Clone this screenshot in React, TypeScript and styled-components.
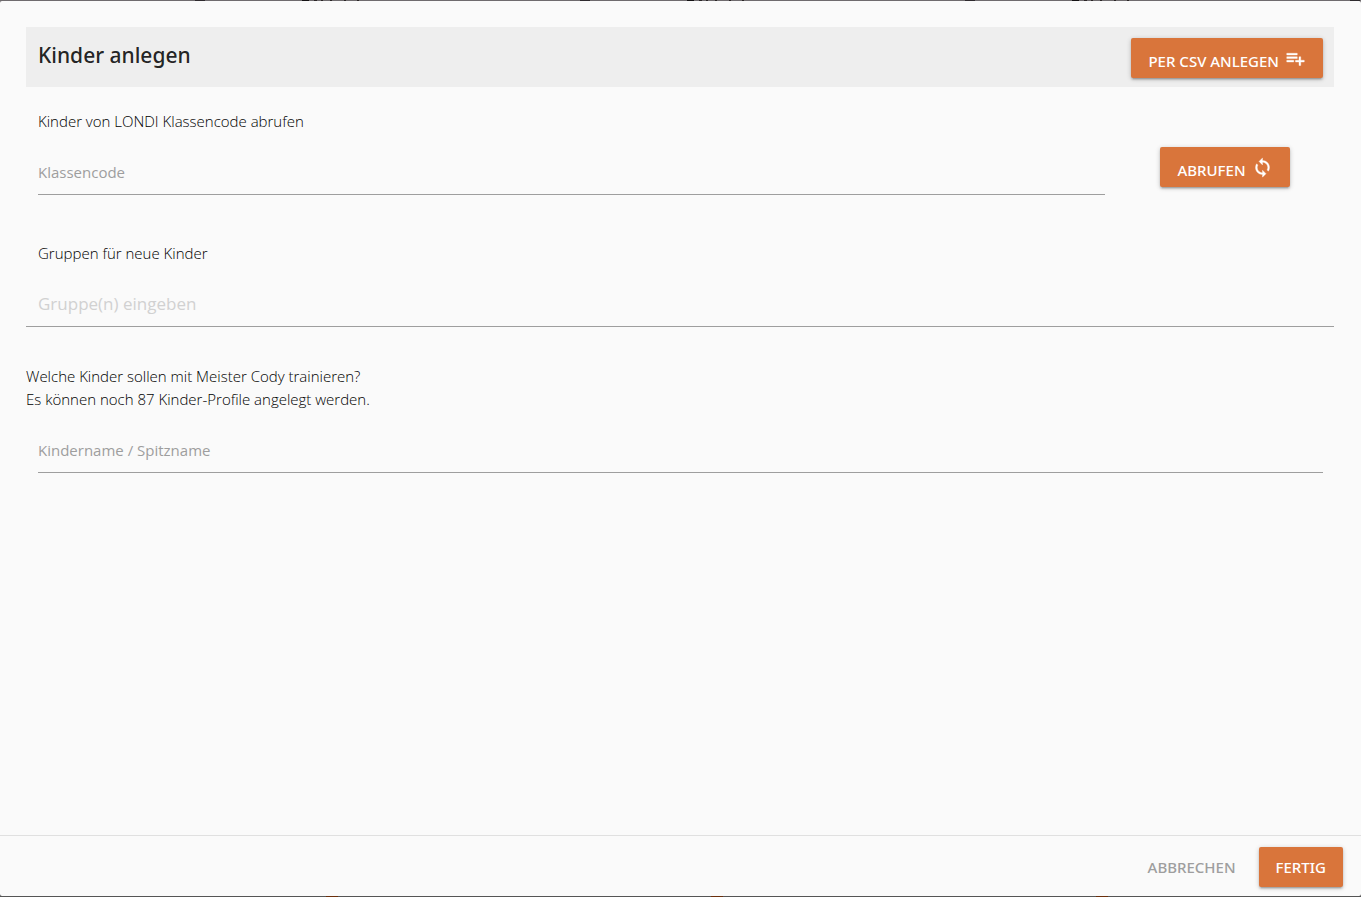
import React from "react";
import styled, { createGlobalStyle } from "styled-components";

const GlobalStyle = createGlobalStyle`
  *, *::before, *::after { box-sizing: border-box; }
  body {
    margin: 0;
    background: #6f6b6e;
    color: rgba(0, 0, 0, 0.87);
    font-family: "Segoe UI", "Open Sans", "Noto Sans", sans-serif;
    font-size: 15px;
    line-height: 23px;
  }
`;

/* The dimmed list behind the dialog shows only along its top and bottom edges. */
const Backdrop = styled.div`
  display: flex;
  min-height: 100vh;
  padding: 1px 0;
  background:
    repeating-linear-gradient(
      90deg,
      transparent 0 195px,
      #2e2a2e 195px 205px,
      transparent 205px 302px,
      #141214 302px 309px,
      transparent 309px 314px,
      #2a2526 314px 317px,
      transparent 317px 321px,
      #2a2526 321px 323px,
      transparent 323px 330px,
      #2a2526 330px 332px,
      transparent 332px 344px,
      #2a2526 344px 346px,
      transparent 346px 357px,
      #2a2526 357px 359px,
      transparent 359px 385px
    ) top / 100% 1px no-repeat,
    repeating-linear-gradient(
      90deg,
      transparent 0 326px,
      #6b2f0c 326px 338px,
      transparent 338px 385px
    ) bottom / 100% 1px no-repeat,
    linear-gradient(#6f6b6e 50%, #555 50%);
`;

const Dialog = styled.form`
  flex: 1;
  display: flex;
  flex-direction: column;
  min-width: 0;
  border-radius: 2px;
  background: #fafafa;
`;

const Content = styled.main`
  flex: 1;
  padding: 26px 27px 26px 26px;
`;

const Header = styled.header`
  display: flex;
  align-items: center;
  justify-content: space-between;
  height: 60px;
  padding: 2px 11px 0 12px;
  background: #eee;
`;

const Title = styled.h1`
  margin: 0;
  padding-bottom: 6px;
  font-family: "Segoe UI", "Noto Sans", sans-serif;
  font-size: 21px;
  font-weight: 500;
  line-height: 28px;
`;

const Button = styled.button<{ $flat?: boolean }>`
  display: inline-flex;
  align-items: center;
  justify-content: center;
  gap: 6px;
  height: 40px;
  padding: 0 17px;
  border: 0;
  border-radius: 2px;
  background: ${(p) => (p.$flat ? "transparent" : "#d9753b")};
  box-shadow: ${(p) =>
    p.$flat
      ? "none"
      : "0 2px 2px 0 rgba(0,0,0,.14), 0 3px 1px -2px rgba(0,0,0,.12), 0 1px 5px 0 rgba(0,0,0,.2)"};
  color: ${(p) => (p.$flat ? "#9e9e9e" : "#fff")};
  font-family: "Segoe UI", "Noto Sans", sans-serif;
  font-size: 15px;
  font-weight: 500;
  line-height: 24px;
  text-transform: uppercase;
  white-space: nowrap;
  cursor: pointer;
`;

const IconLabel = styled.span`
  padding-top: 6px;
`;

const Icon = styled.svg`
  flex: none;
  width: 21px;
  height: 21px;
  fill: currentColor;
  stroke: currentColor;
  stroke-width: 0.4;
`;

const FetchRow = styled.section`
  display: grid;
  grid-template-columns: 5fr 1fr;
  margin-top: 23px;
`;

const FetchAction = styled.div`
  display: flex;
  align-items: flex-start;
  justify-content: center;
  padding-top: 37px;
`;

const Field = styled.div`
  display: flex;
  flex-direction: column;
  padding: 0 11px 0 12px;
`;

const Label = styled.label`
  color: #000;
  font-weight: 300;
`;

const Input = styled.input`
  width: 100%;
  height: 45px;
  margin-top: 17px;
  padding: 0;
  border: 0;
  border-bottom: 1px solid #9e9e9e;
  border-radius: 0;
  outline: none;
  background: transparent;
  color: inherit;
  font-family: inherit;
  font-size: 15px;

  &::placeholder {
    color: #9e9e9e;
    opacity: 1;
  }
`;

const GroupSection = styled.section`
  display: flex;
  flex-direction: column;
  margin-top: 47px;
`;

const GroupLabel = styled(Label)`
  padding: 0 12px;
`;

const ChipInput = styled(Input)`
  padding: 0 12px 2px;
  font-size: 17px;

  &::placeholder {
    color: #d1d1d1;
  }
`;

const ChildrenSection = styled.section`
  margin-top: 38px;
`;

const Question = styled.p`
  margin: 0;
  color: #000;
  font-weight: 300;
`;

const Footer = styled.footer`
  display: flex;
  align-items: center;
  justify-content: flex-end;
  gap: 6px;
  height: 61px;
  padding: 2px 18px 0;
  border-top: 1px solid #e0e0e0;
`;

function PlaylistAddIcon() {
  return (
    <Icon viewBox="0 0 24 24" aria-hidden>
      <path d="M14 10H2v2h12v-2zm0-4H2v2h12V6zm4 8v-4h-2v4h-4v2h4v4h2v-4h4v-2h-4zM2 16h8v-2H2v2z" />
    </Icon>
  );
}

function SyncIcon() {
  return (
    <Icon viewBox="0 0 24 24" aria-hidden>
      <path d="M12 4V1L8 5l4 4V6c3.31 0 6 2.69 6 6 0 1.01-.25 1.97-.7 2.8l1.46 1.46C19.54 15.03 20 13.57 20 12c0-4.42-3.58-8-8-8zm0 14c-3.31 0-6-2.69-6-6 0-1.01.25-1.97.7-2.8L5.24 7.74C4.46 8.97 4 10.43 4 12c0 4.42 3.58 8 8 8v3l4-4-4-4v3z" />
    </Icon>
  );
}

export default function App() {
  return (
    <>
      <GlobalStyle />
      <Backdrop>
        <Dialog onSubmit={(e: React.FormEvent) => e.preventDefault()}>
          <Content>
            <Header>
              <Title>Kinder anlegen</Title>
              <Button type="button">
                <IconLabel>Per CSV anlegen</IconLabel>
                <PlaylistAddIcon />
              </Button>
            </Header>

            <FetchRow>
              <Field>
                <Label htmlFor="class-code">Kinder von LONDI Klassencode abrufen</Label>
                <Input id="class-code" placeholder="Klassencode" />
              </Field>
              <FetchAction>
                <Button type="button">
                  <IconLabel>Abrufen</IconLabel>
                  <SyncIcon />
                </Button>
              </FetchAction>
            </FetchRow>

            <GroupSection>
              <GroupLabel htmlFor="groups">Gruppen für neue Kinder</GroupLabel>
              <ChipInput id="groups" placeholder="Gruppe(n) eingeben" />
            </GroupSection>

            <ChildrenSection>
              <Question>Welche Kinder sollen mit Meister Cody trainieren?</Question>
              <Question>Es können noch 87 Kinder-Profile angelegt werden.</Question>
              <Field>
                <Input aria-label="Kindername / Spitzname" placeholder="Kindername / Spitzname" />
              </Field>
            </ChildrenSection>
          </Content>

          <Footer>
            <Button type="button" $flat>
              Abbrechen
            </Button>
            <Button type="submit">Fertig</Button>
          </Footer>
        </Dialog>
      </Backdrop>
    </>
  );
}
